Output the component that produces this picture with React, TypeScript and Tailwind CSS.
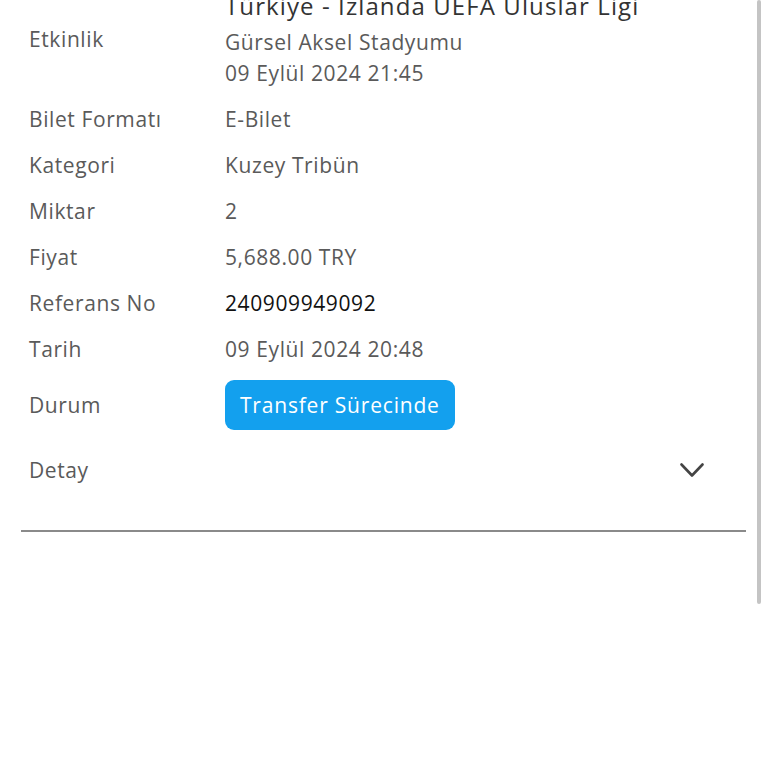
const rows: { label: string; value: string; dark?: boolean }[] = [
  { label: "Bilet Formatı", value: "E-Bilet" },
  { label: "Kategori", value: "Kuzey Tribün" },
  { label: "Miktar", value: "2" },
  { label: "Fiyat", value: "5,688.00 TRY" },
  { label: "Referans No", value: "240909949092", dark: true },
  { label: "Tarih", value: "09 Eylül 2024 20:48" },
];

export default function App() {
  return (
    <div
      className="relative h-[768px] w-[768px] overflow-hidden bg-white"
      style={{ fontFamily: '"Open Sans", "Noto Sans", sans-serif' }}
    >
      <div className="-mt-[12px] px-[29px]">
        <div className="grid grid-cols-[196px_1fr] items-center gap-y-[15px] text-[21px] leading-[31px] tracking-[0.6px] text-[#5a5a5a]">
          <div className="mt-[2px]">Etkinlik</div>
          <div>
            <div className="text-[24px] font-medium leading-[36px] tracking-[1.1px] text-[#333]">
              Türkiye - İzlanda UEFA Uluslar Ligi
            </div>
            <div className="mt-[3px]">Gürsel Aksel Stadyumu</div>
            <div>09 Eylül 2024 21:45</div>
          </div>

          {rows.map((r) => (
            <div key={r.label} className="contents">
              <div>{r.label}</div>
              <div className={r.dark ? "text-[#111]" : ""}>{r.value}</div>
            </div>
          ))}

          <div>Durum</div>
          <div>
            <span className="inline-flex h-[50px] items-center rounded-[9px] bg-[#13a0ee] px-[15px] font-medium tracking-[0.8px] text-white">
              Transfer Sürecinde
            </span>
          </div>
        </div>

        <div className="mt-[25px] flex items-center justify-between pr-[35px] text-[21px] leading-[31px] tracking-[0.6px] text-[#5a5a5a]">
          <div>Detay</div>
          <svg width="24" height="15" viewBox="0 0 24 15" fill="none" className="text-[#444]">
            <polyline points="1.5,1.5 12,12.5 22.5,1.5" stroke="currentColor" strokeWidth="2.6" strokeLinecap="round" strokeLinejoin="round" />
          </svg>
        </div>
      </div>

      <div className="ml-[21px] mr-[22px] mt-[44px] h-[2px] bg-[#8a8a8a]" />

      <div className="absolute right-[7px] top-0 h-[604px] w-[4px] rounded-full bg-[#c4c4c4]" />
    </div>
  );
}
